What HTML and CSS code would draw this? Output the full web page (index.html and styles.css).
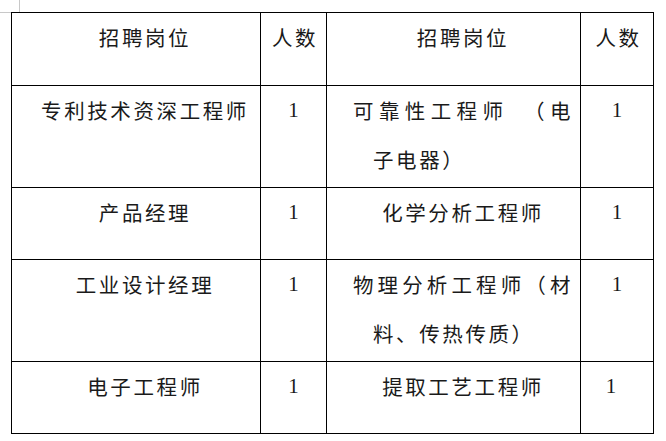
FILE: index.html
```html
<!DOCTYPE html>
<html lang="zh-CN">
<head>
<meta charset="utf-8">
<title>招聘岗位</title>
<link rel="stylesheet" href="styles.css">
</head>
<body>
<div class="page">
  <div class="mark-row"><div class="mark-v"></div></div>
  <div class="sheet">
    <div class="mark-h"></div>
    <table class="jobs">
      <colgroup>
        <col class="c1"><col class="c2"><col class="c3"><col class="c4">
      </colgroup>
      <tr class="r-head">
        <td class="pos">招聘岗位</td>
        <td class="num cjk">人数</td>
        <td class="pos pos-r">招聘岗位</td>
        <td class="num cjk">人数</td>
      </tr>
      <tr class="r-tall">
        <td class="pos">专利技术资深工程师</td>
        <td class="num">1</td>
        <td class="pos pos-r wrap">可靠性工程师　（电子电器）</td>
        <td class="num">1</td>
      </tr>
      <tr class="r-short">
        <td class="pos">产品经理</td>
        <td class="num">1</td>
        <td class="pos pos-r">化学分析工程师</td>
        <td class="num">1</td>
      </tr>
      <tr class="r-tall">
        <td class="pos">工业设计经理</td>
        <td class="num">1</td>
        <td class="pos pos-r wrap">物理分析工程师（材料、传热传质）</td>
        <td class="num">1</td>
      </tr>
      <tr class="r-short">
        <td class="pos">电子工程师</td>
        <td class="num">1</td>
        <td class="pos pos-r">提取工艺工程师</td>
        <td class="num num-off">1</td>
      </tr>
    </table>
  </div>
</div>
</body>
</html>
```
FILE: styles.css
```css
html, body {
  margin: 0;
  padding: 0;
  background: #ffffff;
}
.page {
  width: 666px;
  height: 441px;
  overflow: hidden;
}
.mark-row {
  height: 12px;
  display: flex;
}
.mark-v {
  width: 19px;
  height: 12px;
  border-right: 1px solid #c8c8c8;
}
.sheet {
  display: flex;
  align-items: flex-start;
}
.mark-h {
  width: 11px;
  border-top: 1px solid #c8c8c8;
}
.jobs {
  border-collapse: collapse;
  table-layout: fixed;
  width: 642px;
  color: #1a1a1a;
}
.c1 { width: 249px; }
.c2 { width: 66px; }
.c3 { width: 254px; }
.c4 { width: 73px; }
.jobs td {
  border: 1px solid #000;
  vertical-align: top;
  padding: 0;
  line-height: 49px;
  font-family: "Noto Sans CJK SC", sans-serif;
  font-size: 20.5px;
  letter-spacing: 2.6px;
}
.r-head { height: 73px; }
.r-tall { height: 102px; }
.r-short { height: 72px; }
.pos {
  text-align: center;
  padding-left: 18px !important;
}
.pos-r {
  padding-left: 26px !important;
  padding-right: 7px !important;
}
.wrap {
  text-align: justify;
  text-align-last: left;
  padding-left: 46px !important;
  text-indent: -20px;
}
.num {
  text-align: center;
  font-family: "Liberation Serif", serif !important;
  font-size: 21px !important;
  letter-spacing: 0 !important;
}
.num.cjk {
  font-family: "Noto Sans CJK SC", sans-serif !important;
  font-size: 20.5px !important;
  letter-spacing: 2.6px !important;
  padding-left: 3px !important;
}
.num-off {
  padding-right: 12px !important;
}
```
